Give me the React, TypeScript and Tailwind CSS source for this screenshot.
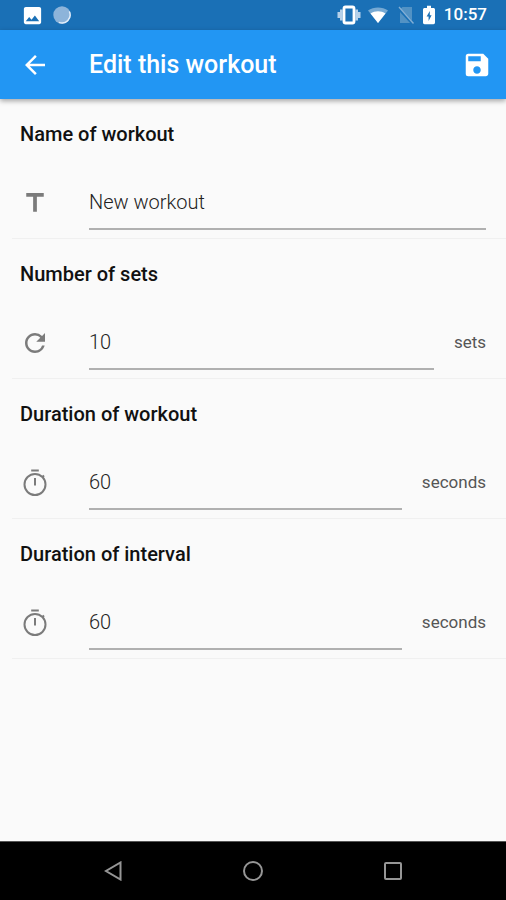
import type { ReactNode } from 'react';
import { useState } from 'react';
import { MdArrowBack, MdImage, MdRefresh, MdSave, MdTitle } from 'react-icons/md';

interface FieldProps {
  id: string;
  label: string;
  icon: ReactNode;
  value: string;
  unit?: string;
  numeric?: boolean;
  onChange: (value: string) => void;
}

const Field = ({ id, label, icon, value, unit, numeric, onChange }: FieldProps) => (
  <section>
    <label htmlFor={id} className="flex h-[68px] items-center px-5 pt-0.5 text-[20px] font-medium text-[#111111]">
      {label}
    </label>
    <div className="flex h-[71px] items-center px-5 text-[#7b7b7b]">
      <span className="w-[69px] shrink-0">{icon}</span>
      <input
        id={id}
        type="text"
        inputMode={numeric ? 'numeric' : 'text'}
        value={value}
        onChange={(e) => onChange(e.target.value)}
        className="h-[54px] min-w-0 flex-1 border-b-2 border-[#b0b0b0] bg-transparent text-[20px] font-light text-[#222222] outline-none"
      />
      {unit && <span className="ml-5 text-[17px] text-[#555555]">{unit}</span>}
    </div>
    <hr className="ml-3 border-[#f0f0f0]" />
  </section>
);

const TimerIcon = () => (
  <svg viewBox="0 0 30 30" className="h-[30px] w-[30px]" fill="none" stroke="currentColor" strokeWidth="2">
    <circle cx="15" cy="16.500" r="10.500" />
    <path d="M11.200 2.500h7.600M15 10v7.500M22.200 9.300l1.800-1.800" />
  </svg>
);

const StatusBar = () => (
  <div className="flex h-[30px] items-center justify-between bg-[#1a70b6] pr-[19px] pl-[21px] text-white">
    <div className="flex items-center gap-[9px]">
      <MdImage className="h-[23px] w-[23px]" />
      <svg viewBox="0 0 18 18" className="h-[18px] w-[18px]">
        <circle cx="9" cy="9" r="8.7" fill="#8db4da" />
        <path d="M16.300 5.500A8 8 0 0 1 6 16.300" fill="none" stroke="#e3eefa" strokeWidth="1.4" />
      </svg>
    </div>
    <div className="flex items-center">
      <svg viewBox="0 0 24 20" className="mr-[6px] h-5 w-6">
        <path d="M1.800 7v6M4.300 4.500v11M22.200 7v6M19.700 4.500v11" stroke="#b5d0e9" strokeWidth="2.6" />
        <rect x="7" y="2" width="10" height="16" rx="1.500" fill="#1a70b6" stroke="#fff" strokeWidth="2.8" />
      </svg>
      <svg viewBox="0 0 22 18" className="mr-2 h-[18px] w-[22px]">
        <path d="M11 17 1 4.500C6.500.5 15.500.5 21 4.500Z" fill="#76a9d3" />
        <path d="M11 17 3.500 7.600C8 4.600 14 4.600 18.500 7.600Z" fill="#fff" />
      </svg>
      <svg viewBox="0 0 18 20" className="mr-2 h-5 w-[18px]">
        <path d="M5.500 2H15v16H3V4.500Z" fill="#5292c4" />
        <path d="m1 2.500 15.500 17" stroke="#1a70b6" strokeWidth="3" />
        <path d="m2 2 14.500 16.500" stroke="#83afd5" strokeWidth="1.400" />
      </svg>
      <svg viewBox="0 0 12 20" className="mr-[9px] h-5 w-3">
        <path d="M4 .8h4V3h2.400C11.300 3 12 3.700 12 4.600v13c0 .9-.7 1.600-1.600 1.600H1.600C.7 19.200 0 18.500 0 17.600v-13C0 3.700.7 3 1.600 3H4Z" fill="#fff" />
        <path d="M6.800 6 3.600 11.600h2V16L8.600 10.200h-1.800Z" fill="#1a70b6" />
      </svg>
      <span className="text-[17px] font-medium">10:57</span>
    </div>
  </div>
);

const NavigationBar = () => (
  <nav className="flex h-[59px] justify-center border-t border-[#555555] bg-black">
    <button type="button" aria-label="Back" className="flex max-w-[140px] flex-1 items-center justify-center">
      <svg viewBox="0 0 20 20" className="h-5 w-5" fill="none" stroke="#969696" strokeWidth="2">
        <path d="M17.500 1.500v17L3 10Z" />
      </svg>
    </button>
    <button type="button" aria-label="Home" className="flex max-w-[140px] flex-1 items-center justify-center">
      <svg viewBox="0 0 20 20" className="h-5 w-5" fill="none" stroke="#969696" strokeWidth="2">
        <circle cx="10" cy="10" r="9" />
      </svg>
    </button>
    <button type="button" aria-label="Recent apps" className="flex max-w-[140px] flex-1 items-center justify-center">
      <svg viewBox="0 0 20 20" className="h-5 w-5" fill="none" stroke="#969696" strokeWidth="2">
        <rect x="2" y="2" width="16" height="16" rx="1" />
      </svg>
    </button>
  </nav>
);

export default function App() {
  const [name, setName] = useState('New workout');
  const [sets, setSets] = useState('10');
  const [duration, setDuration] = useState('60');
  const [interval, setIntervalLength] = useState('60');

  return (
    <div className="flex min-h-screen flex-col bg-[#fafafa] font-['Roboto',sans-serif]">
      <StatusBar />
      <header className="flex h-[69px] items-center bg-[#2296f3] pr-[14px] pl-5 text-white shadow-[0_2px_5px_rgba(0,0,0,0.35)]">
        <button type="button" aria-label="Back" className="w-[69px] shrink-0">
          <MdArrowBack className="h-[30px] w-[30px]" />
        </button>
        <h1 className="flex-1 text-[25px] font-medium">Edit this workout</h1>
        <button type="button" aria-label="Save workout">
          <MdSave className="h-[30px] w-[30px]" />
        </button>
      </header>

      <main className="flex-1">
        <Field id="name" label="Name of workout" icon={<MdTitle className="h-[30px] w-[30px]" />} value={name} onChange={setName} />
        <Field id="sets" label="Number of sets" icon={<MdRefresh className="h-[30px] w-[30px]" />} value={sets} unit="sets" numeric onChange={setSets} />
        <Field id="duration" label="Duration of workout" icon={<TimerIcon />} value={duration} unit="seconds" numeric onChange={setDuration} />
        <Field id="interval" label="Duration of interval" icon={<TimerIcon />} value={interval} unit="seconds" numeric onChange={setIntervalLength} />
      </main>

      <NavigationBar />
    </div>
  );
}
